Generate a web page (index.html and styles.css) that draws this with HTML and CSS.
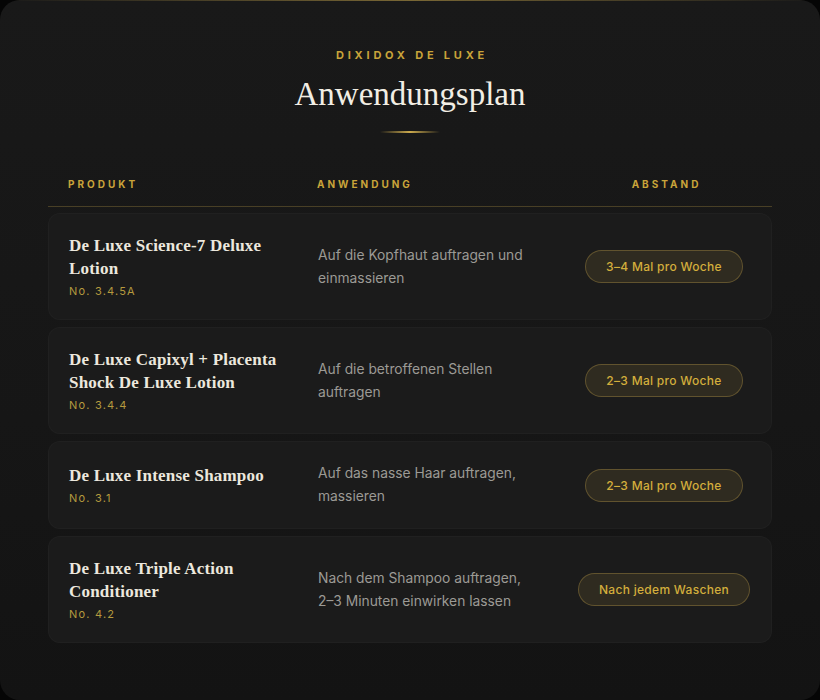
FILE: index.html
```
<!DOCTYPE html>
<html lang="de">
<head>
<meta charset="utf-8">
<title>Anwendungsplan</title>
<link rel="stylesheet" href="styles.css">
</head>
<body>
<main class="card">
  <header class="intro">
    <p class="eyebrow">DIXIDOX DE LUXE</p>
    <h1 class="title">Anwendungsplan</h1>
    <div class="divider"></div>
  </header>
  <section class="table">
    <div class="head">
      <span>PRODUKT</span>
      <span>ANWENDUNG</span>
      <span class="center">ABSTAND</span>
    </div>
    <div class="rows">
      <div class="row">
        <div class="product">
          <div class="name">De Luxe Science-7 Deluxe Lotion</div>
          <div class="code">No. 3.4.5A</div>
        </div>
        <div class="usage">Auf die Kopfhaut auftragen und einmassieren</div>
        <div class="interval"><span class="badge">3–4 Mal pro Woche</span></div>
      </div>
      <div class="row">
        <div class="product">
          <div class="name">De Luxe Capixyl + Placenta Shock De Luxe Lotion</div>
          <div class="code">No. 3.4.4</div>
        </div>
        <div class="usage">Auf die betroffenen Stellen auftragen</div>
        <div class="interval"><span class="badge">2–3 Mal pro Woche</span></div>
      </div>
      <div class="row">
        <div class="product">
          <div class="name">De Luxe Intense Shampoo</div>
          <div class="code">No. 3.1</div>
        </div>
        <div class="usage">Auf das nasse Haar auftragen, massieren</div>
        <div class="interval"><span class="badge">2–3 Mal pro Woche</span></div>
      </div>
      <div class="row">
        <div class="product">
          <div class="name">De Luxe Triple Action Conditioner</div>
          <div class="code">No. 4.2</div>
        </div>
        <div class="usage">Nach dem Shampoo auftragen, 2–3 Minuten einwirken lassen</div>
        <div class="interval"><span class="badge">Nach jedem Waschen</span></div>
      </div>
    </div>
  </section>
</main>
</body>
</html>
```

FILE: styles.css
```
* { box-sizing: border-box; }

html, body {
  margin: 0;
  padding: 0;
  background: #050505;
}

body {
  font-family: Inter, "Liberation Sans", sans-serif;
  color: #e8e4da;
}

.card {
  position: relative;
  width: 820px;
  height: 700px;
  border-radius: 20px;
  background: linear-gradient(180deg, #191919 0%, #161616 60%, #131313 100%);
  padding: 48px 48px 0;
  overflow: hidden;
}

.card::before {
  content: "";
  position: absolute;
  top: 0;
  left: 0;
  right: 0;
  height: 1px;
  background: linear-gradient(90deg, rgba(201,168,76,0) 0%, rgba(201,168,76,0.55) 50%, rgba(201,168,76,0) 100%);
}

.intro {
  display: flex;
  flex-direction: column;
  align-items: center;
}

.eyebrow {
  margin: 0;
  font-size: 11px;
  line-height: 14px;
  font-weight: 700;
  letter-spacing: 3.8px;
  color: #c9a43a;
  padding-left: 4px;
}

.title {
  margin: 12px 0 0;
  font-family: "Liberation Serif", "DejaVu Serif", serif;
  font-weight: 400;
  font-size: 33px;
  line-height: 40px;
  color: #f2eee4;
}

.divider {
  margin-top: 17px;
  width: 60px;
  height: 2px;
  background: linear-gradient(90deg, rgba(201,168,76,0) 0%, rgba(214,178,80,0.95) 50%, rgba(201,168,76,0) 100%);
}

.table {
  margin-top: 39px;
}

.head,
.row {
  display: grid;
  grid-template-columns: 229px 1fr 174px;
  column-gap: 20px;
  align-items: center;
}

.head {
  padding: 5px 20px 15px;
  border-bottom: 1px solid rgba(201,168,76,0.28);
  font-size: 10px;
  line-height: 14px;
  font-weight: 700;
  letter-spacing: 3px;
  color: #c9a43a;
}

.head .center {
  text-align: center;
  padding-left: 3px;
}

.rows {
  display: flex;
  flex-direction: column;
  gap: 7px;
  margin-top: 6px;
}

.row {
  padding: 20px;
  border-radius: 12px;
  background: #1b1b1b;
  border: 1px solid rgba(255,255,255,0.025);
}

.name {
  font-family: "Liberation Serif", "DejaVu Serif", serif;
  font-weight: 700;
  font-size: 17px;
  line-height: 23px;
  color: #ece8de;
  letter-spacing: 0.2px;
}

.code {
  margin-top: 3px;
  font-size: 11px;
  line-height: 16px;
  letter-spacing: 1.2px;
  color: #b59a3e;
}

.usage {
  padding-right: 24px;
  font-size: 13.8px;
  line-height: 23px;
  color: #9c9a95;
}

.interval {
  display: flex;
  justify-content: center;
}

.badge {
  display: inline-block;
  padding: 8px 20px;
  border-radius: 999px;
  border: 1px solid rgba(201,168,76,0.32);
  background: rgba(201,168,76,0.12);
  font-size: 12px;
  line-height: 15px;
  font-weight: 500;
  letter-spacing: 0.3px;
  color: #d3ae3c;
  white-space: nowrap;
}
```
